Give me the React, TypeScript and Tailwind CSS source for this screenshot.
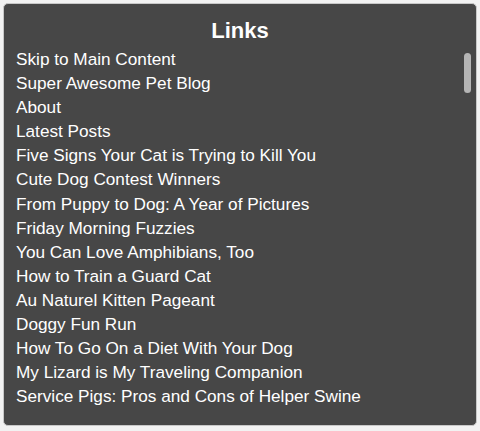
const links = [
  "Skip to Main Content",
  "Super Awesome Pet Blog",
  "About",
  "Latest Posts",
  "Five Signs Your Cat is Trying to Kill You",
  "Cute Dog Contest Winners",
  "From Puppy to Dog: A Year of Pictures",
  "Friday Morning Fuzzies",
  "You Can Love Amphibians, Too",
  "How to Train a Guard Cat",
  "Au Naturel Kitten Pageant",
  "Doggy Fun Run",
  "How To Go On a Diet With Your Dog",
  "My Lizard is My Traveling Companion",
  "Service Pigs: Pros and Cons of Helper Swine",
];

export default function App() {
  return (
    <div className="h-[431px] w-[480px] bg-[#f2f2f2] p-[3px] pb-[5px] font-['Liberation_Sans',Arial,sans-serif]">
      <div className="relative h-full w-full overflow-hidden rounded-[5px] border border-[#c8c8c8] bg-[#474747] text-white">
        <h1 className="pt-[14px] text-center text-[22px] font-bold leading-[26px]">Links</h1>
        <ul className="mt-[3px] pl-[12px]">
          {links.map((l) => (
            <li key={l} className="text-[17.2px] leading-[24.1px]">
              {l}
            </li>
          ))}
        </ul>
        <div className="absolute right-[5px] top-[49px] h-[40px] w-[7px] rounded-full bg-[#b5b5b5]" />
      </div>
    </div>
  );
}
